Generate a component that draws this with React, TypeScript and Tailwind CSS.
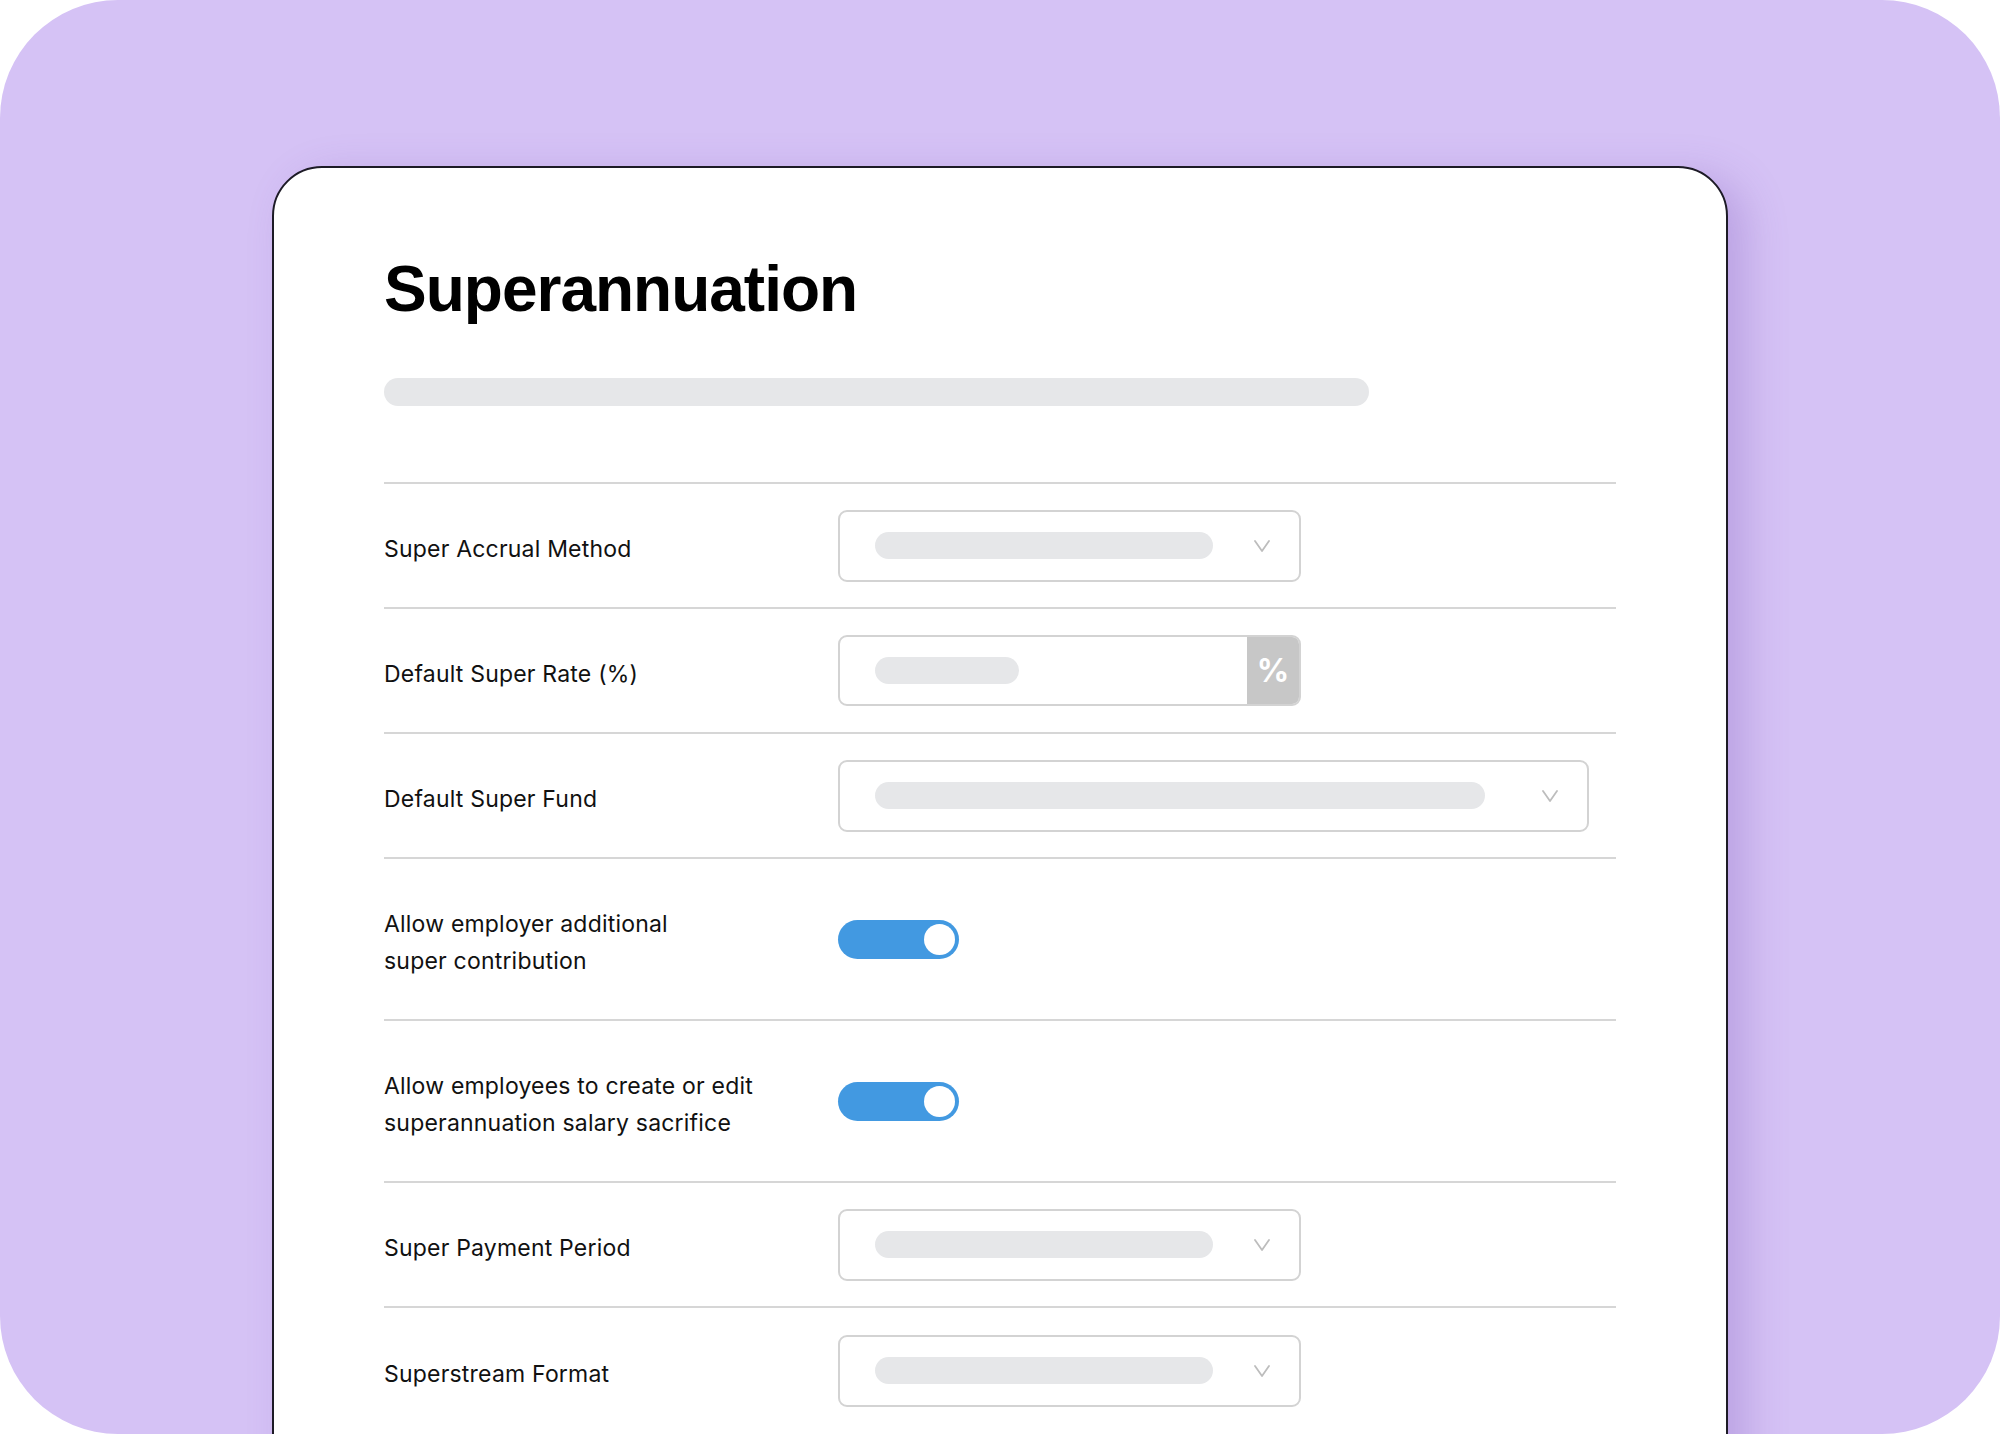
import type { ReactNode } from "react";

const labelFont = { fontFamily: "Inter, 'Noto Sans', sans-serif" };

function Chevron() {
  return (
    <svg width="16" height="12" viewBox="0 0 16 12" fill="none" aria-hidden="true">
      <polyline points="1,1 8,11 15,1" stroke="#bdbdbd" strokeWidth="1.8" strokeLinecap="round" strokeLinejoin="round" />
    </svg>
  );
}

function Select({ wide }: { wide?: boolean }) {
  return (
    <div
      className={
        wide
          ? "flex h-[72px] w-[751px] items-center rounded-[9px] border-2 border-[#d3d3d3] bg-white pl-[35px] pr-[29px]"
          : "flex h-[72px] w-[463px] items-center rounded-[9px] border-2 border-[#d3d3d3] bg-white pl-[35px] pr-[29px]"
      }
    >
      <div className="h-[27px] flex-1 rounded-full bg-[#e6e7e9]" />
      <div className={wide ? "ml-[57px] flex w-[16px] justify-center" : "ml-[41px] flex w-[16px] justify-center"}>
        <Chevron />
      </div>
    </div>
  );
}

function PercentInput() {
  return (
    <div className="flex h-[71px] w-[463px] overflow-hidden rounded-[9px] border-2 border-[#d3d3d3] bg-white">
      <div className="flex flex-1 items-center pl-[35px]">
        <div className="h-[27px] w-[144px] rounded-full bg-[#e6e7e9]" />
      </div>
      <div
        className="flex w-[52px] items-center justify-center bg-[#c7c7c7] text-[32px] font-bold text-white"
        style={labelFont}
      >
        %
      </div>
    </div>
  );
}

function Toggle() {
  return (
    <div className="flex h-[39px] w-[121px] items-center justify-end rounded-full bg-[#4299e1] px-[4px]">
      <div className="h-[31px] w-[31px] rounded-full bg-white" />
    </div>
  );
}

function Row({ label, tall, last, children }: { label: ReactNode; tall?: boolean; last?: boolean; children: ReactNode }) {
  const base = tall ? "flex h-[162px] items-center" : "flex h-[125px] items-center";
  return (
    <div className={last ? base : base + " border-b-2 border-[#d6d6d6]"}>
      <div className="w-[454px] pt-[7px] text-[23px] leading-[37px] tracking-[0.2px] text-[#111]" style={labelFont}>
        {label}
      </div>
      {children}
    </div>
  );
}

export default function App() {
  return (
    <div className="h-[1434px] w-[2000px] overflow-hidden bg-white">
      <div className="h-[1434px] w-[2000px] overflow-hidden rounded-[118px] bg-[#d5c2f5] pl-[272px] pt-[166px]">
        <div className="h-[1320px] w-[1456px] rounded-t-[50px] border-2 border-[#1d1b26] bg-white pl-[110px] pr-[110px] pt-[89px] shadow-[18px_10px_40px_rgba(120,80,180,0.28)]">
          <h1
            className="text-[64px] font-bold leading-[64px] tracking-[-1px] text-black"
            style={{ fontFamily: "'Liberation Sans', Arial, sans-serif" }}
          >
            Superannuation
          </h1>
          <div className="mt-[57px] h-[28px] w-[985px] rounded-full bg-[#e6e7e9]" />
          <div className="mt-[76px] border-t-2 border-[#d6d6d6]">
            <Row label="Super Accrual Method">
              <Select />
            </Row>
            <Row label="Default Super Rate (%)">
              <PercentInput />
            </Row>
            <Row label="Default Super Fund">
              <Select wide />
            </Row>
            <Row
              tall
              label={
                <>
                  <span className="block">Allow employer additional</span>
                  <span className="block">super contribution</span>
                </>
              }
            >
              <Toggle />
            </Row>
            <Row
              tall
              label={
                <>
                  <span className="block">Allow employees to create or edit</span>
                  <span className="block">superannuation salary sacrifice</span>
                </>
              }
            >
              <Toggle />
            </Row>
            <Row label="Super Payment Period">
              <Select />
            </Row>
            <Row last label="Superstream Format">
              <Select />
            </Row>
          </div>
        </div>
      </div>
    </div>
  );
}
